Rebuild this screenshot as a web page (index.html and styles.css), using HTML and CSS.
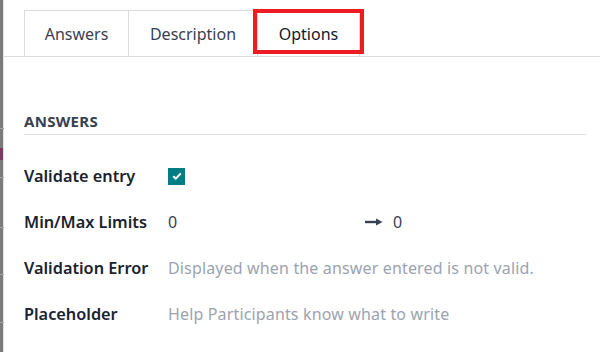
FILE: index.html
```html
<!DOCTYPE html>
<html>
<head>
<meta charset="utf-8">
<link rel="stylesheet" href="styles.css">
</head>
<body>
<div class="page">
  <div class="edge">
    <span class="edge-line l1"></span>
    <span class="edge-mark"></span>
    <span class="edge-line l2"></span>
    <span class="edge-line l3"></span>
    <span class="edge-line l4"></span>
    <span class="edge-line l5"></span>
  </div>
  <div class="main">
    <div class="tabs">
      <div class="tab">Answers</div>
      <div class="tab">Description</div>
      <div class="tab active">Options<span class="highlight"></span></div>
    </div>
    <div class="content">
      <div class="section-title">ANSWERS</div>
      <div class="form">
        <div class="label">Validate entry</div>
        <div class="value"><span class="check"><svg width="10" height="8" viewBox="0 0 10 8"><path d="M1.2 4.2 L3.8 6.6 L8.8 1.4" fill="none" stroke="#fff" stroke-width="2"/></svg></span></div>
        <div class="label">Min/Max Limits</div>
        <div class="value limits"><span class="num">0</span><span class="arrow"><svg width="18" height="8" viewBox="0 0 18 8"><path d="M0 4 H12" stroke="#374151" stroke-width="2.4"/><path d="M11 0.5 L17.5 4 L11 7.5 Z" fill="#374151"/></svg></span><span class="num">0</span></div>
        <div class="label">Validation Error</div>
        <div class="value placeholder">Displayed when the answer entered is not valid.</div>
        <div class="label">Placeholder</div>
        <div class="value placeholder">Help Participants know what to write</div>
      </div>
    </div>
  </div>
</div>
</body>
</html>
```

FILE: styles.css
```css
html, body {
  margin: 0;
  padding: 0;
  background: #fff;
}
body {
  font-family: "Noto Sans", "Open Sans", sans-serif;
  color: #1f2937;
}
.page {
  display: flex;
  width: 600px;
  height: 352px;
  overflow: hidden;
}
.edge {
  position: relative;
  width: 3px;
  flex: none;
  background: #7b7b7b;
  border-right: 1px solid #e4e4e4;
}
.edge-line {
  position: absolute;
  left: 0;
  width: 4px;
  height: 1px;
  background: #a4a4a4;
}
.l1 { top: 128px; }
.l2 { top: 177px; }
.l3 { top: 227px; }
.l4 { top: 274px; }
.l5 { top: 322px; }
.edge-mark {
  position: absolute;
  left: 0;
  top: 148px;
  width: 3px;
  height: 12px;
  background: #7a3a64;
}
.main {
  flex: 1;
}
.tabs {
  display: flex;
  padding: 10px 0 0 20px;
  border-bottom: 1px solid #dcdcdc;
}
.tab {
  position: relative;
  height: 46px;
  box-sizing: border-box;
  border: 1px solid #dcdcdc;
  border-bottom: none;
  margin-right: -1px;
  display: flex;
  align-items: center;
  justify-content: center;
  font-size: 16px;
  color: #374151;
}
.tab:nth-child(1) { width: 105px; }
.tab:nth-child(2) { width: 130px; }
.tab:nth-child(3) { width: 103px; color: #111827; }
.highlight {
  position: absolute;
  left: -5px;
  top: -2px;
  width: 111px;
  height: 45px;
  box-sizing: border-box;
  border: 4.5px solid #ed1c24;
}
.content {
  padding: 54px 14px 0 20px;
}
.section-title {
  font-size: 15px;
  font-weight: 700;
  color: #374151;
  letter-spacing: 0.3px;
  line-height: 20px;
  padding-bottom: 3px;
  border-bottom: 1px solid #e2e2e2;
}
.form {
  display: grid;
  grid-template-columns: 144px 1fr;
  grid-auto-rows: 46px;
  margin-top: 18px;
  align-items: center;
}
.label {
  font-size: 16.3px;
  font-weight: 600;
  color: #1a2230;
}
.value {
  font-size: 16px;
  display: flex;
  align-items: center;
}
.check {
  width: 17px;
  height: 17px;
  background: #017e84;
  display: flex;
  align-items: center;
  justify-content: center;
}
.limits .num {
  color: #374151;
}
.limits .num:first-child {
  width: 197px;
}
.arrow {
  display: flex;
  width: 28px;
}
.placeholder {
  color: #9ca3af;
  letter-spacing: 0.15px;
}
```
